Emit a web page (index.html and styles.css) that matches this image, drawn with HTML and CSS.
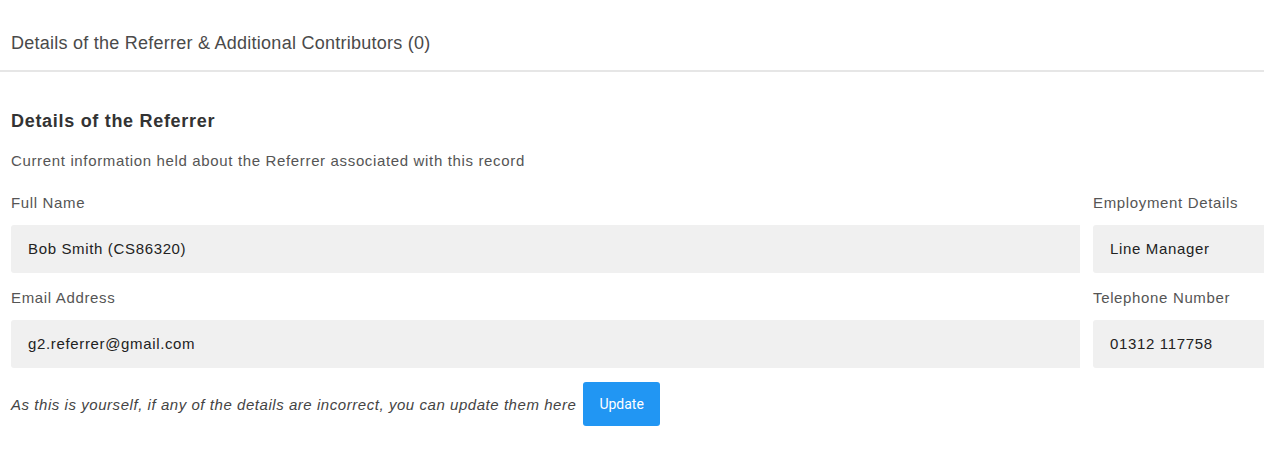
FILE: index.html
```html
<!DOCTYPE html>
<html>
<head>
    <title>Referrer Details</title>
    <link rel="stylesheet" href="styles.css">
</head>
<body>
    <div class="page">
        <div class="panel-header">Details of the Referrer &amp; Additional Contributors (0)</div>

        <div class="panel-body">
            <h2>Details of the Referrer</h2>
            <p class="intro">Current information held about the Referrer associated with this record</p>

            <div class="fields">
                <div class="field">
                    <label>Full Name</label>
                    <div class="value">Bob Smith (CS86320)</div>
                </div>
                <div class="field">
                    <label>Employment Details</label>
                    <div class="value">Line Manager</div>
                </div>
                <div class="field">
                    <label>Email Address</label>
                    <div class="value">g2.referrer@gmail.com</div>
                </div>
                <div class="field">
                    <label>Telephone Number</label>
                    <div class="value">01312 117758</div>
                </div>
            </div>

            <div class="update-row">
                <em>As this is yourself, if any of the details are incorrect, you can update them here</em>
                <button>Update</button>
            </div>
        </div>
    </div>
</body>
</html>
```

FILE: styles.css
```css
body {
    margin: 0;
    font-family: "Liberation Sans", Arial, sans-serif;
    font-size: 15px;
    letter-spacing: 0.65px;
    color: #555;
    background-color: white;
}
.page {
    width: 1264px;
}
.panel-header {
    padding: 33px 11px 17px;
    font-size: 18px;
    letter-spacing: 0.25px;
    line-height: 20px;
    color: #4a4a4a;
    border-bottom: 2px solid #e6e6e6;
}
.panel-body {
    padding: 39px 0 0 11px;
}
.panel-body h2 {
    margin: 0;
    font-size: 18px;
    letter-spacing: 0.7px;
    line-height: 20px;
    color: #333;
}
.intro {
    margin: 20px 0 0;
    line-height: 20px;
}
.fields {
    display: grid;
    grid-template-columns: 1fr 171px;
    column-gap: 13px;
    row-gap: 15px;
    margin-top: 22px;
}
.field label {
    display: block;
    line-height: 20px;
    white-space: nowrap;
}
.field .value {
    margin-top: 12px;
    height: 48px;
    line-height: 48px;
    padding-left: 17px;
    background-color: #f0f0f0;
    border-radius: 3px 0 0 3px;
    color: #222;
}
.update-row {
    display: flex;
    align-items: center;
    gap: 7px;
    margin-top: 14px;
}
.update-row em {
    color: #444;
    letter-spacing: 0.55px;
}
button {
    height: 44px;
    padding: 0 16px;
    border: none;
    border-radius: 3px;
    background-color: #2196f3;
    color: white;
    font-family: Roboto, sans-serif;
    font-size: 14px;
    letter-spacing: 0;
    cursor: pointer;
}
```
